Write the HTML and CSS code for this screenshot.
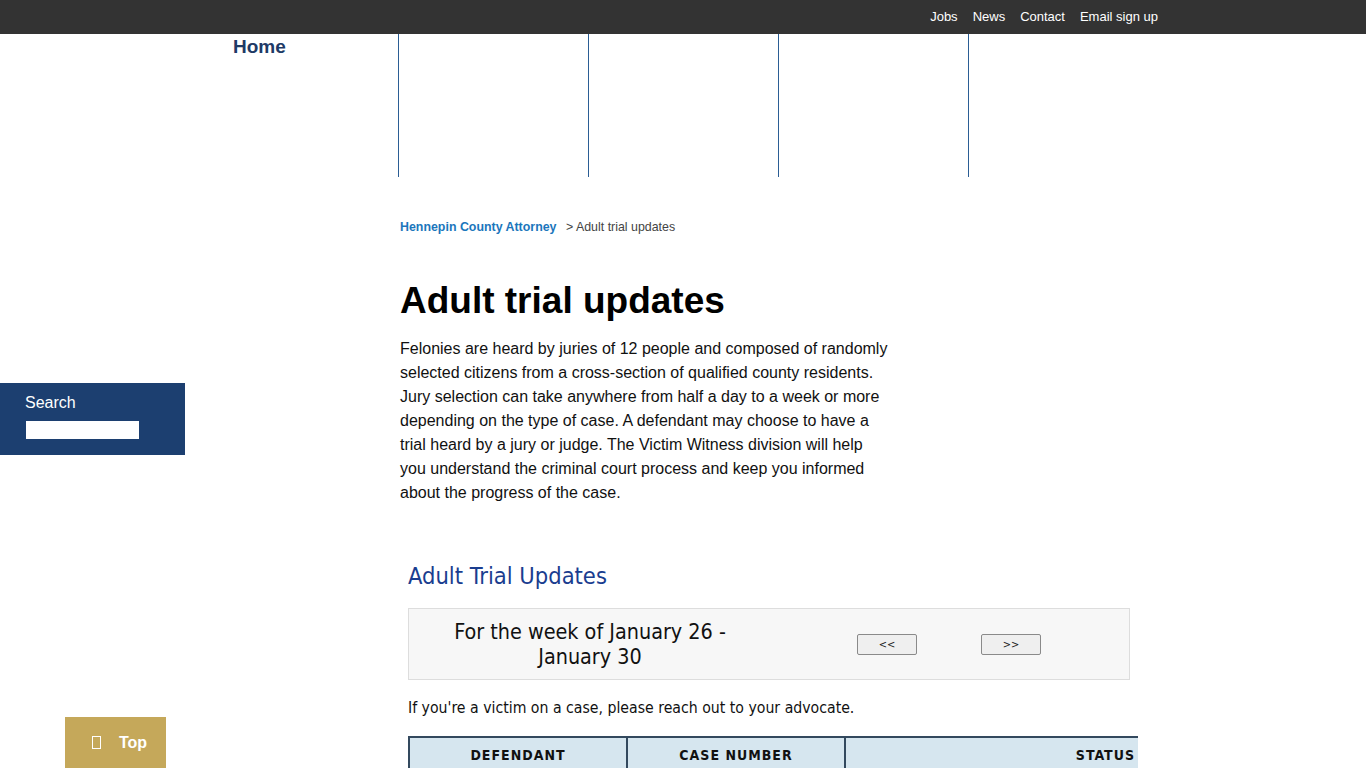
FILE: index.html
```html
<!DOCTYPE html>
<html lang="en">
<head>
  <meta charset="UTF-8">
  <meta name="viewport" content="width=device-width, initial-scale=1.0">
  <title>Adult trial updates - Hennepin County Attorney</title>
  <link rel="stylesheet" href="styles.css">
</head>
<body>
<div class="utility-bar">
  <ul class="utility-links">
    <li><a href="#">Jobs</a></li>
    <li><a href="#">News</a></li>
    <li><a href="#">Contact</a></li>
    <li><a href="#">Email sign up</a></li>
  </ul>
</div>

<nav class="main-nav">
  <div class="nav-home"><a href="#">Home</a></div>
  <div class="nav-col"></div>
  <div class="nav-col"></div>
  <div class="nav-col"></div>
  <div class="nav-col"></div>
</nav>

<main class="content">
  <div class="breadcrumb">
    <a href="#">Hennepin County Attorney</a>
    <span>&gt; Adult trial updates</span>
  </div>

  <h1>Adult trial updates</h1>
  <p class="intro">Felonies are heard by juries of 12 people and composed of randomly selected citizens from a cross-section of qualified county residents. Jury selection can take anywhere from half a day to a week or more depending on the type of case. A defendant may choose to have a trial heard by a jury or judge. The Victim Witness division will help you understand the criminal court process and keep you informed about the progress of the case.</p>

  <section class="trials">
    <h2>Adult Trial Updates</h2>
    <div class="week-box">
      <div class="week-label">For the week of January 26 -<br>January 30</div>
      <div class="week-buttons">
        <button>&lt;&lt;</button>
        <button>&gt;&gt;</button>
      </div>
    </div>
    <p class="note">If you're a victim on a case, please reach out to your advocate.</p>
    <div class="table-wrap">
      <table class="trial-table">
        <thead>
          <tr>
            <th class="col-def">Defendant</th>
            <th class="col-case">Case number</th>
            <th class="col-status">Status</th>
          </tr>
        </thead>
      </table>
    </div>
  </section>
</main>

<div class="search-panel">
  <label for="search">Search</label>
  <input type="text" id="search">
</div>

<a class="top-link" href="#"><span class="top-icon"></span>Top</a>
</body>
</html>
```

FILE: styles.css
```css
body {
  margin: 0;
  font-family: "Liberation Sans", Arial, sans-serif;
  color: #000;
  background: #fff;
}

a {
  text-decoration: none;
}

.utility-bar {
  height: 34px;
  background: #333333;
  display: flex;
  justify-content: flex-end;
  padding-right: 208px;
}

.utility-links {
  list-style: none;
  margin: 0;
  padding: 0 0 2px;
  display: flex;
  align-items: center;
  gap: 15px;
}

.utility-links a {
  color: #fff;
  font-size: 13px;
}

.main-nav {
  display: flex;
  margin-left: 233px;
  height: 143px;
}

.nav-home {
  width: 165px;
  padding-top: 2px;
}

.nav-home a {
  color: #1e3a66;
  font-size: 19px;
  font-weight: bold;
}

.nav-col {
  width: 189px;
  border-left: 1px solid #2b5d94;
}

.content {
  margin-left: 400px;
  width: 740px;
}

.breadcrumb {
  margin-top: 43px;
  font-size: 12.4px;
  color: #444;
}

.breadcrumb a {
  color: #1b76bc;
  font-weight: bold;
  margin-right: 6px;
}

h1 {
  font-size: 37px;
  margin: 45px 0 0;
  line-height: 44px;
}

.intro {
  width: 490px;
  font-size: 16px;
  line-height: 24px;
  margin: 14px 0 0;
  color: #111;
}

.trials {
  margin-left: 8px;
  font-family: "DejaVu Sans Condensed", "DejaVu Sans", sans-serif;
}

.trials h2 {
  margin: 56px 0 0;
  font-size: 23.5px;
  font-weight: normal;
  color: #1a3d8f;
  line-height: 30px;
}

.week-box {
  margin-top: 17px;
  width: 720px;
  height: 70px;
  background: #f7f7f7;
  border: 1px solid #dddddd;
  display: flex;
  align-items: center;
}

.week-label {
  width: 362px;
  text-align: center;
  font-size: 21.4px;
  line-height: 25px;
  color: #111;
}

.week-buttons {
  display: flex;
  gap: 64px;
  margin-left: 86px;
}

.week-buttons button {
  width: 60px;
  height: 21px;
  font-family: "DejaVu Sans Condensed", sans-serif;
  font-size: 11px;
  color: #222;
  background: #efefef;
  border: 1px solid #8a8a8a;
  border-radius: 2px;
  padding: 0;
}

.note {
  margin: 18px 0 0;
  font-size: 15.7px;
  color: #111;
}

.table-wrap {
  margin-top: 19px;
  width: 730px;
  overflow: hidden;
}

.trial-table {
  width: 760px;
  border-collapse: collapse;
  border-top: 2px solid #33495e;
  border-left: 2px solid #33495e;
}

.trial-table th {
  background: #d6e6ef;
  border-right: 2px solid #33495e;
  font-size: 14px;
  letter-spacing: 1px;
  text-transform: uppercase;
  padding: 9px 4px 7px;
  height: 30px;
  vertical-align: top;
  color: #111;
}

.trial-table .col-def,
.trial-table .col-case {
  width: 208px;
  text-align: center;
}

.trial-table .col-status {
  text-align: right;
  padding-right: 31px;
}

.search-panel {
  position: fixed;
  left: 0;
  top: 383px;
  width: 160px;
  height: 72px;
  padding-left: 25px;
  background: #1c3f70;
}

.search-panel label {
  display: block;
  color: #fff;
  font-size: 16px;
  line-height: 20px;
  margin-top: 10px;
  margin-bottom: 8px;
}

.search-panel input {
  display: block;
  width: 113px;
  height: 18px;
  margin: 0 0 0 1px;
  padding: 0;
  border: none;
}

.top-link {
  position: fixed;
  left: 65px;
  bottom: 0;
  width: 101px;
  height: 51px;
  background: #c5a85a;
  color: #fff;
  font-weight: bold;
  font-size: 16px;
  display: flex;
  align-items: center;
  justify-content: center;
  padding-left: 8px;
  box-sizing: border-box;
}

.top-icon {
  width: 7px;
  height: 11px;
  border: 1px solid #fff;
  margin-right: 18px;
}
```
